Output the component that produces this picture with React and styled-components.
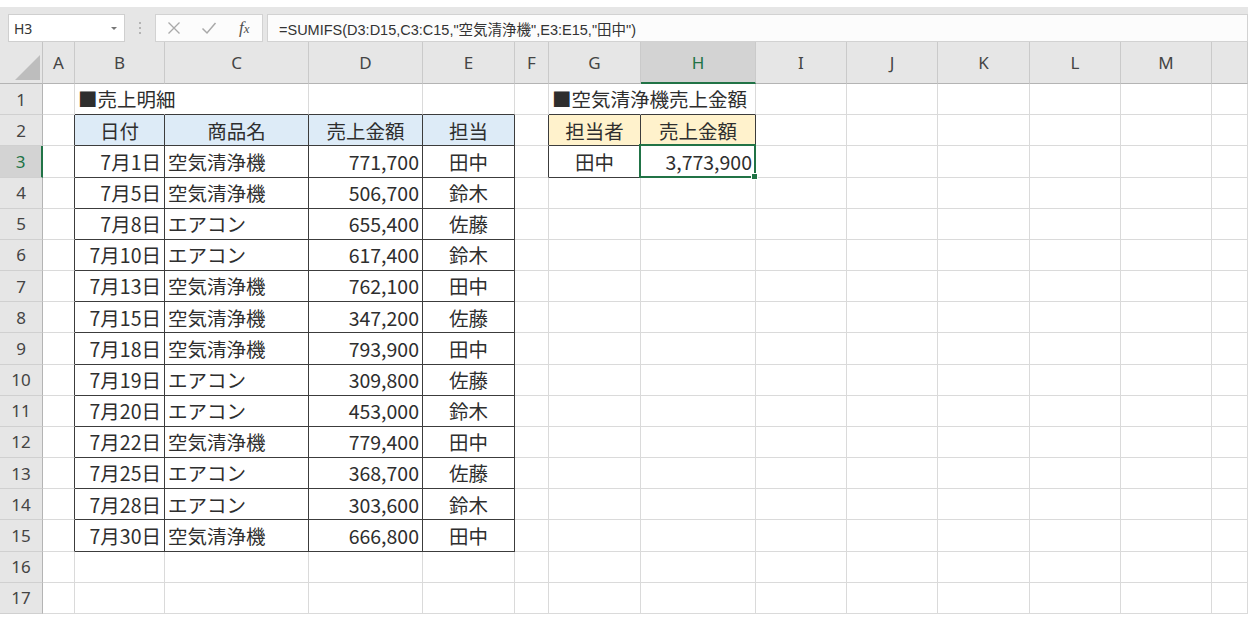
import styled, { createGlobalStyle } from 'styled-components'

const GRID = '#dadada'
const DARK = '#3c3c3c'
const GREEN = '#217346'
const BLUE = '#ddebf7'
const YELLOW = '#fff2cc'

const GlobalStyle = createGlobalStyle`
  html, body { margin: 0; padding: 0; background: #fff; }
  body { font-family: 'Noto Sans CJK JP', sans-serif; }
`

const Frame = styled.div`
  width: 1248px;
  padding-top: 7px;
`

const Toolbar = styled.div`
  display: flex;
  align-items: flex-end;
  height: 35px;
  background: #e6e6e6;
`

const NameBox = styled.div`
  box-sizing: border-box;
  margin-left: 8px;
  width: 117px;
  height: 28px;
  display: flex;
  align-items: center;
  justify-content: space-between;
  padding: 0 7px 0 5px;
  background: #fff;
  border: 1px solid #cfcfcf;
  font-family: 'Noto Sans', 'Noto Sans CJK JP', sans-serif;
  font-size: 14px;
  color: #333;
`

const Caret = styled.span`
  width: 0;
  height: 0;
  border-left: 3px solid transparent;
  border-right: 3px solid transparent;
  border-top: 3px solid #777;
`

const Dots = styled.div`
  width: 30px;
  height: 28px;
  display: flex;
  flex-direction: column;
  align-items: center;
  justify-content: center;
  gap: 3px;
  & > span {
    width: 2px;
    height: 2px;
    background: #b4b4b4;
  }
`

const FxBox = styled.div`
  box-sizing: border-box;
  width: 108px;
  height: 28px;
  display: grid;
  grid-template-columns: repeat(3, 1fr);
  align-items: center;
  justify-items: center;
  background: #fcfcfc;
  border: 1px solid #d2d2d2;
`

const Fx = styled.span`
  font-family: 'Liberation Serif', serif;
  font-style: italic;
  color: #505050;
  font-size: 17px;
  & small {
    font-size: 13px;
  }
`

const FormulaBox = styled.div`
  box-sizing: border-box;
  flex: 1;
  margin-left: 4px;
  height: 28px;
  display: flex;
  align-items: center;
  padding-left: 11px;
  background: #fcfcfc;
  border: 1px solid #d2d2d2;
  font-family: 'Liberation Sans', 'Noto Sans CJK JP', sans-serif;
  font-size: 14.5px;
  color: #333;
  white-space: nowrap;
`

const Sheet = styled.div`
  display: grid;
  grid-template-columns: 43px 32px 90px 144px 114px 92px 34px 92px 115px 91px 91px 92px 91px 91px 36px;
  grid-template-rows: 42px repeat(17, 31.18px);
`

const Corner = styled.div`
  box-sizing: border-box;
  display: flex;
  align-items: flex-end;
  justify-content: flex-end;
  padding: 0 2px 3px 0;
  background: #e6e6e6;
  border-right: 1px solid #c4c4c4;
  border-bottom: 1px solid #b4b4b4;
  & > span {
    width: 25px;
    height: 25px;
    background: #bdbdbd;
    clip-path: polygon(100% 0, 100% 100%, 0 100%);
  }
`

const ColHead = styled.div`
  box-sizing: border-box;
  display: flex;
  align-items: center;
  justify-content: center;
  background: ${p => (p.$active ? '#d3d3d3' : '#e6e6e6')};
  border-right: 1px solid #cacaca;
  border-bottom: ${p => (p.$active ? `2px solid ${GREEN}` : '1px solid #b4b4b4')};
  font-family: 'Noto Sans', sans-serif;
  font-size: 17px;
  color: ${p => (p.$active ? GREEN : '#444')};
`

const RowHead = styled.div`
  box-sizing: border-box;
  display: flex;
  align-items: center;
  justify-content: center;
  background: ${p => (p.$active ? '#d3d3d3' : '#e6e6e6')};
  border-right: ${p => (p.$active ? `2px solid ${GREEN}` : '1px solid #b4b4b4')};
  border-bottom: 1px solid #d0d0d0;
  font-family: 'Noto Sans', sans-serif;
  font-size: 17px;
  color: ${p => (p.$active ? GREEN : '#444')};
`

const Cell = styled.div`
  position: relative;
  box-sizing: border-box;
  display: flex;
  align-items: center;
  justify-content: ${p =>
    p.$align === 'right' ? 'flex-end' : p.$align === 'center' ? 'center' : 'flex-start'};
  padding: 0 3px 0 3px;
  border-right: 1px solid ${p => (p.$rd ? DARK : p.$open ? 'transparent' : GRID)};
  border-bottom: 1px solid ${p => (p.$bd ? DARK : GRID)};
  background: ${p => p.$fill || 'transparent'};
  font-size: 19.5px;
  line-height: 1;
  color: #2e2e2e;
  white-space: nowrap;
`

const Selection = styled.div`
  position: absolute;
  top: -2px;
  left: -2px;
  right: -1px;
  bottom: -1px;
  border: 2px solid ${GREEN};
  z-index: 2;
  pointer-events: none;
  & > span {
    position: absolute;
    right: -4px;
    bottom: -4px;
    width: 5px;
    height: 5px;
    background: ${GREEN};
    border: 1px solid #fff;
  }
`

const LETTERS = ['A', 'B', 'C', 'D', 'E', 'F', 'G', 'H', 'I', 'J', 'K', 'L', 'M', '']

const SALES = [
  ['7月1日', '空気清浄機', '771,700', '田中'],
  ['7月5日', '空気清浄機', '506,700', '鈴木'],
  ['7月8日', 'エアコン', '655,400', '佐藤'],
  ['7月10日', 'エアコン', '617,400', '鈴木'],
  ['7月13日', '空気清浄機', '762,100', '田中'],
  ['7月15日', '空気清浄機', '347,200', '佐藤'],
  ['7月18日', '空気清浄機', '793,900', '田中'],
  ['7月19日', 'エアコン', '309,800', '佐藤'],
  ['7月20日', 'エアコン', '453,000', '鈴木'],
  ['7月22日', '空気清浄機', '779,400', '田中'],
  ['7月25日', 'エアコン', '368,700', '佐藤'],
  ['7月28日', 'エアコン', '303,600', '鈴木'],
  ['7月30日', '空気清浄機', '666,800', '田中'],
]

// cells keyed by "row,col" (col 0 = A)
const cells = {
  '1,1': { text: '■売上明細', open: true },
  '1,6': { text: '■空気清浄機売上金額', open: true },
  '2,1': { text: '日付', align: 'center', fill: BLUE },
  '2,2': { text: '商品名', align: 'center', fill: BLUE },
  '2,3': { text: '売上金額', align: 'center', fill: BLUE },
  '2,4': { text: '担当', align: 'center', fill: BLUE },
  '2,6': { text: '担当者', align: 'center', fill: YELLOW },
  '2,7': { text: '売上金額', align: 'center', fill: YELLOW },
  '3,6': { text: '田中', align: 'center' },
  '3,7': { text: '3,773,900', align: 'right', selected: true },
}
SALES.forEach((row, i) => {
  const r = i + 3
  cells[`${r},1`] = { text: row[0], align: 'right' }
  cells[`${r},2`] = { text: row[1] }
  cells[`${r},3`] = { text: row[2], align: 'right' }
  cells[`${r},4`] = { text: row[3], align: 'center' }
})

const boxed = (r, c) =>
  (r >= 2 && r <= 15 && c >= 1 && c <= 4) || (r >= 2 && r <= 3 && c >= 6 && c <= 7)

function Cross() {
  return (
    <svg width="14" height="14" viewBox="0 0 14 14">
      <path d="M1.5 1.5 L12.5 12.5 M12.5 1.5 L1.5 12.5" stroke="#a9a9a9" strokeWidth="1.3" fill="none" />
    </svg>
  )
}

function Tick() {
  return (
    <svg width="16" height="14" viewBox="0 0 16 14">
      <path d="M1.5 7.5 L6 12 L14.5 2" stroke="#a9a9a9" strokeWidth="1.5" fill="none" />
    </svg>
  )
}

export default function App() {
  const rows = []
  for (let r = 1; r <= 17; r++) {
    rows.push(
      <RowHead key={`h${r}`} $active={r === 3}>
        {r}
      </RowHead>
    )
    for (let c = 0; c < 14; c++) {
      const cell = cells[`${r},${c}`] || {}
      rows.push(
        <Cell
          key={`${r}-${c}`}
          $align={cell.align}
          $fill={cell.fill}
          $open={cell.open}
          $rd={boxed(r, c) || boxed(r, c + 1)}
          $bd={boxed(r, c) || boxed(r + 1, c)}
        >
          {cell.text}
          {cell.selected && (
            <Selection>
              <span />
            </Selection>
          )}
        </Cell>
      )
    }
  }

  return (
    <>
      <GlobalStyle />
      <Frame>
        <Toolbar>
          <NameBox>
            H3
            <Caret />
          </NameBox>
          <Dots>
            <span />
            <span />
            <span />
          </Dots>
          <FxBox>
            <Cross />
            <Tick />
            <Fx>
              f<small>x</small>
            </Fx>
          </FxBox>
          <FormulaBox>=SUMIFS(D3:D15,C3:C15,"空気清浄機",E3:E15,"田中")</FormulaBox>
        </Toolbar>
        <Sheet>
          <Corner>
            <span />
          </Corner>
          {LETTERS.map((l, i) => (
            <ColHead key={i} $active={l === 'H'}>
              {l}
            </ColHead>
          ))}
          {rows}
        </Sheet>
      </Frame>
    </>
  )
}
